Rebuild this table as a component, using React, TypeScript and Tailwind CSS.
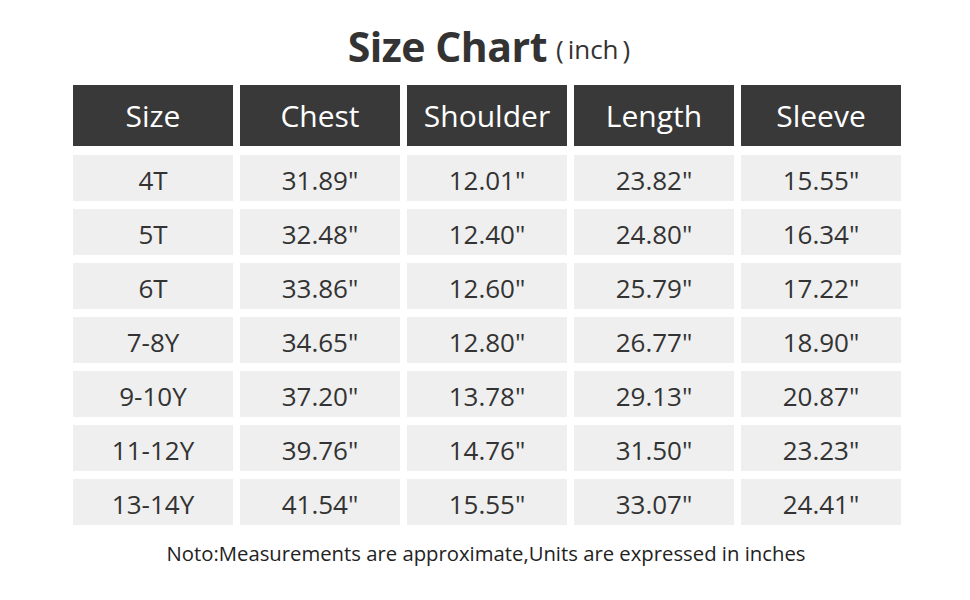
const headers = ["Size", "Chest", "Shoulder", "Length", "Sleeve"]

const rows = [
  ["4T", '31.89"', '12.01"', '23.82"', '15.55"'],
  ["5T", '32.48"', '12.40"', '24.80"', '16.34"'],
  ["6T", '33.86"', '12.60"', '25.79"', '17.22"'],
  ["7-8Y", '34.65"', '12.80"', '26.77"', '18.90"'],
  ["9-10Y", '37.20"', '13.78"', '29.13"', '20.87"'],
  ["11-12Y", '39.76"', '14.76"', '31.50"', '23.23"'],
  ["13-14Y", '41.54"', '15.55"', '33.07"', '24.41"'],
]

export default function App() {
  return (
    <div
      className="w-[970px] h-[600px] bg-white text-[#333333] overflow-hidden"
      style={{ fontFamily: '"Open Sans", "Noto Sans", sans-serif' }}
    >
      <div className="h-[85px] flex items-center justify-center pl-[8px] pt-[8px]">
        <span className="text-[41px] font-bold tracking-[-0.5px] text-[#333333]">Size Chart</span>
        <span className="text-[26px] ml-[9px] mt-[6px] text-[#333333]">
          (<span className="mx-[4px]">inch</span>)
        </span>
      </div>

      <div className="ml-[73px] w-[828px]">
        <div className="grid grid-cols-5 gap-x-[7px]">
          {headers.map((h) => (
            <div
              key={h}
              className="h-[61px] bg-[#393939] text-white text-[30px] flex items-center justify-center"
            >
              {h}
            </div>
          ))}
        </div>

        <div className="grid grid-cols-5 gap-x-[7px] gap-y-[8px] mt-[9px]">
          {rows.map((r) =>
            r.map((c, i) => (
              <div
                key={r[0] + i}
                className="h-[46px] bg-[#efefef] text-[26px] flex items-center justify-center pt-[4px]"
              >
                {c}
              </div>
            ))
          )}
        </div>
      </div>

      <div className="mt-[13px] text-center text-[20.3px] text-[#222222] pl-[2px]">
        Noto:Measurements are approximate,Units are expressed in inches
      </div>
    </div>
  )
}
